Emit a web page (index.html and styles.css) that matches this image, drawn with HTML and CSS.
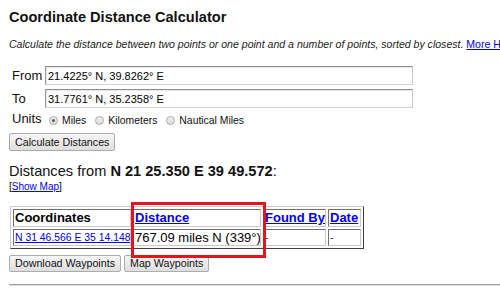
FILE: index.html
```html
<!DOCTYPE html>
<html>
<head>
<meta charset="utf-8">
<link rel="stylesheet" href="styles.css">
</head>
<body>
<div class="page">
  <h1 class="title">Coordinate Distance Calculator</h1>
  <p class="intro">Calculate the distance between two points or one point and a number of points, sorted by closest. <a href="#">More Help</a></p>
  <div class="form">
    <div class="row">
      <span class="lbl">From</span>
      <input class="field" type="text" value="21.4225° N, 39.8262° E">
    </div>
    <div class="row">
      <span class="lbl">To</span>
      <input class="field" type="text" value="31.7761° N, 35.2358° E">
    </div>
    <div class="row units">
      <span class="lbl">Units</span>
      <span class="opts">
        <span class="opt"><span class="radio checked"></span>Miles</span>
        <span class="opt"><span class="radio"></span>Kilometers</span>
        <span class="opt"><span class="radio"></span>Nautical Miles</span>
      </span>
    </div>
    <button class="btn calc" type="button">Calculate Distances</button>
  </div>
  <div class="result-head">Distances from <b>N 21 25.350 E 39 49.572</b>:</div>
  <div class="showmap">[<a href="#">Show Map</a>]</div>
  <div class="table-wrap">
    <table class="results">
      <colgroup>
        <col class="c1"><col class="c2"><col class="c3"><col class="c4">
      </colgroup>
      <tr class="head">
        <th>Coordinates</th>
        <th><a href="#">Distance</a></th>
        <th><a href="#">Found By</a></th>
        <th><a href="#">Date</a></th>
      </tr>
      <tr class="data">
        <td class="coord"><a href="#">N 31 46.566 E 35 14.148</a></td>
        <td class="dist">767.09 miles N (339°)</td>
        <td class="dash">-</td>
        <td class="dash">-</td>
      </tr>
    </table>
    <div class="highlight"></div>
  </div>
  <div class="actions">
    <button class="btn" type="button">Download Waypoints</button>
    <button class="btn" type="button">Map Waypoints</button>
  </div>
  <div class="rule"></div>
</div>
</body>
</html>
```
FILE: styles.css
```css
html, body {
  margin: 0;
  padding: 0;
  background: #fff;
  overflow: hidden;
}
body {
  font-family: "Liberation Sans", Arial, sans-serif;
  color: #000;
}
a {
  color: #0000ee;
  text-decoration: underline;
}
.page {
  padding-left: 9px;
  width: 491px;
  overflow: hidden;
}
.title {
  margin: 9px 0 0 0;
  font-size: 14.6px;
  line-height: 16px;
  font-weight: bold;
  color: #111;
}
.intro {
  margin: 13px 0 0 0;
  font-size: 10.55px;
  line-height: 12px;
  font-style: italic;
  white-space: nowrap;
  color: #222;
}
.intro a {
  font-style: normal;
}
.form {
  margin-top: 16px;
}
.row {
  display: flex;
  align-items: center;
  height: 19px;
  margin-bottom: 4px;
}
.lbl {
  width: 33px;
  padding-left: 3px;
  font-size: 13px;
  line-height: 19px;
  color: #111;
}
.field {
  box-sizing: border-box;
  width: 368px;
  height: 19px;
  margin: 0;
  padding: 0 0 0 2px;
  font-family: "Liberation Sans", Arial, sans-serif;
  font-size: 11px;
  color: #000;
  border: 1px solid #a9a9a9;
  border-top-color: #8f8f8f;
  border-left-color: #9a9a9a;
  border-bottom-color: #d4d4d4;
  border-right-color: #c8c8c8;
  box-shadow: inset 1px 1px 0 #e6e6e6;
  background: #fff;
  outline: none;
}
.units {
  height: 17px;
  margin-top: -2px;
  margin-bottom: 0;
  align-items: flex-end;
}
.units .lbl {
  line-height: 17px;
}
.opts {
  display: flex;
  align-items: center;
  font-size: 10.4px;
  line-height: 13px;
  margin-left: 4px;
  padding-top: 2px;
}
.opt {
  display: flex;
  align-items: center;
  margin-right: 9px;
  color: #111;
}
.radio {
  box-sizing: border-box;
  width: 9px;
  height: 9px;
  border-radius: 50%;
  border: 1px solid #a8a8a8;
  background: linear-gradient(#f0f0f0, #dcdcdc);
  margin-right: 4px;
  display: flex;
  align-items: center;
  justify-content: center;
}
.radio.checked::after {
  content: "";
  width: 3px;
  height: 3px;
  border-radius: 50%;
  background: #555;
}
.btn {
  box-sizing: border-box;
  height: 18px;
  padding: 0 5px;
  margin: 0;
  font-family: "Liberation Sans", Arial, sans-serif;
  font-size: 10.7px;
  line-height: 16px;
  white-space: nowrap;
  color: #111;
  background: linear-gradient(#f7f7f7, #dedede);
  border: 1px solid #acacac;
  border-radius: 2px;
}
.calc {
  display: block;
  margin-top: 6px;
}
.result-head {
  margin-top: 12px;
  font-size: 14.6px;
  line-height: 17px;
  color: #111;
}
.showmap {
  margin-top: 1px;
  font-size: 10px;
  line-height: 12px;
}
.table-wrap {
  position: relative;
  margin-top: 13px;
  margin-left: 1px;
  width: 354px;
}
.results {
  table-layout: fixed;
  width: 354px;
  border-collapse: separate;
  border-spacing: 2px;
  border: 1px solid #808080;
  border-top-color: #c8c8c8;
  border-left-color: #c8c8c8;
  border-right-color: #404040;
  border-bottom-color: #404040;
}
.c1 { width: 118px; }
.c2 { width: 128px; }
.c3 { width: 63px; }
.c4 { width: 33px; }
.results th,
.results td {
  padding: 1px 1px;
  border: 1px solid #808080;
  border-top-color: #707070;
  border-left-color: #707070;
  border-right-color: #c8c8c8;
  border-bottom-color: #c8c8c8;
  text-align: left;
  white-space: nowrap;
  overflow: hidden;
  vertical-align: middle;
}
.results th {
  font-size: 13px;
  line-height: 14px;
  font-weight: bold;
}
.results td {
  font-size: 13px;
  line-height: 13px;
}
.results td.coord {
  font-size: 10.4px;
}
.results td.dash {
  font-size: 10px;
  color: #333;
}
.highlight {
  position: absolute;
  left: 121px;
  top: -4px;
  width: 129px;
  height: 50px;
  border: 3px solid #e3141b;
}
.actions {
  display: flex;
  gap: 3px;
  margin-top: 6px;
}
.actions .btn {
  height: 17px;
  line-height: 15px;
}
.rule {
  margin-top: 12px;
  height: 1px;
  border-top: 1px solid #a0a0a0;
  background: #e0e0e0;
}
```
